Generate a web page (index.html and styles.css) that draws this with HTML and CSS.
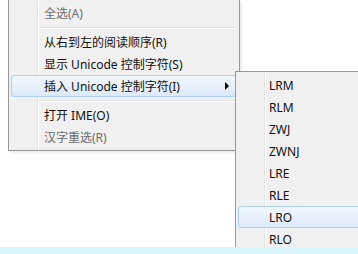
FILE: index.html
```html
<!DOCTYPE html>
<html lang="zh-CN">
<head>
  <meta charset="UTF-8">
  <meta name="viewport" content="width=device-width, initial-scale=1.0">
  <title>输入框右键菜单</title>
  <link rel="stylesheet" href="styles.css">
</head>
<body>
  <div class="desk">
    <!-- main context menu -->
    <ul class="menu main-menu">
      <li class="item disabled">全选(A)</li>
      <li class="sep"></li>
      <li class="item">从右到左的阅读顺序(R)</li>
      <li class="item">显示 Unicode 控制字符(S)</li>
      <li class="item hover has-sub">插入 Unicode 控制字符(I)<span class="arrow"></span></li>
      <li class="sep"></li>
      <li class="item">打开 IME(O)</li>
      <li class="item disabled">汉字重选(R)</li>
    </ul>

    <!-- submenu -->
    <ul class="menu sub-menu">
      <li class="item">LRM</li>
      <li class="item">RLM</li>
      <li class="item">ZWJ</li>
      <li class="item">ZWNJ</li>
      <li class="item">LRE</li>
      <li class="item">RLE</li>
      <li class="item hover">LRO</li>
      <li class="item">RLO</li>
    </ul>
  </div>
  <div class="bar"></div>
</body>
</html>
```

FILE: styles.css
```css
html, body {
  margin: 0;
  padding: 0;
}
body {
  width: 358px;
  height: 254px;
  overflow: hidden;
  display: flex;
  flex-direction: column;
  background: #fff;
  font-family: "Noto Sans", "Noto Sans CJK SC", sans-serif;
  font-size: 12px;
  color: #111;
}
.desk {
  flex: 1;
  position: relative;
}
.bar {
  height: 7px;
  background: #d8f5fb;
  position: relative;
  z-index: 3;
}

.menu {
  position: absolute;
  list-style: none;
  margin: 0;
  padding: 2px;
  background: #f0f0f0;
  border: 1px solid #979797;
  box-shadow: 2px 2px 2px rgba(0, 0, 0, 0.08);
}
/* gutter line */
.menu::before {
  content: "";
  position: absolute;
  top: 0;
  bottom: 0;
  left: 28px;
  width: 1px;
  background: #e2e3e3;
  border-right: 1px solid #fff;
}
.main-menu {
  left: 8px;
  top: -1px;
  width: 226px;
  z-index: 1;
}
.sub-menu {
  left: 235px;
  top: 71px;
  width: 140px;
  z-index: 2;
}

.item {
  position: relative;
  height: 22px;
  line-height: 22px;
  padding-left: 32px;
  white-space: nowrap;
  border: 1px solid transparent;
  box-sizing: border-box;
  border-radius: 3px;
}
.sub-menu .item {
  padding-left: 30px;
}
.disabled {
  color: #6d6d6d;
}
.hover {
  border-color: #aecff7;
  background: linear-gradient(#f2f7fd, #dde9f8);
}
.arrow {
  position: absolute;
  right: 7px;
  top: 6px;
  width: 0;
  height: 0;
  border-left: 4px solid #000;
  border-top: 4px solid transparent;
  border-bottom: 4px solid transparent;
}
.sep {
  position: relative;
  height: 7px;
}
.sep::after {
  content: "";
  position: absolute;
  left: 28px;
  right: 0;
  top: 3px;
  height: 1px;
  background: #e0e0e0;
  border-bottom: 1px solid #fff;
}
```
